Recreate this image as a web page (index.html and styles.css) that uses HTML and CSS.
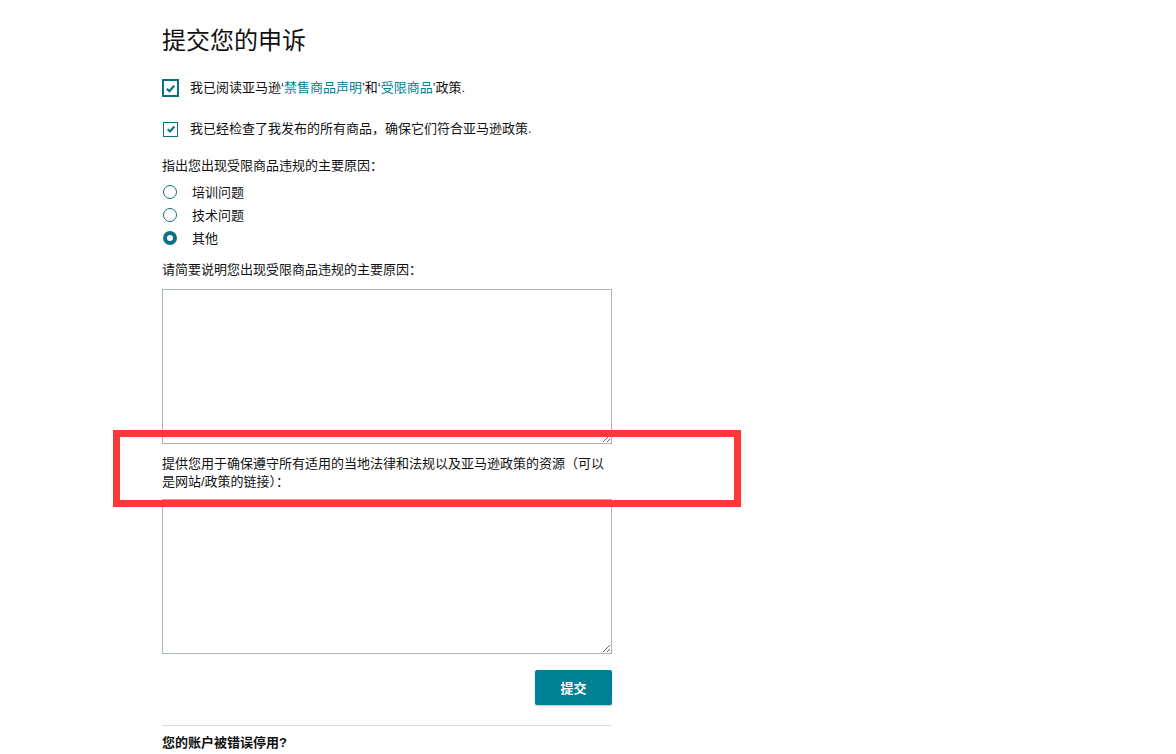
FILE: index.html
```html
<!DOCTYPE html>
<html lang="zh">
<head>
<meta charset="utf-8">
<title>提交您的申诉</title>
<link rel="stylesheet" href="styles.css">
</head>
<body>
<div class="page">
  <h1 class="title">提交您的申诉</h1>

  <div class="check-row first">
    <span class="box box-focus"><svg viewBox="0 0 12 12" width="11" height="11"><path d="M2 6.2 L4.8 9 L10 3" fill="none" stroke="#0b7285" stroke-width="2.4"/></svg></span>
    <span class="check-label">我已阅读亚马逊‘<span class="link">禁售商品声明</span>’和‘<span class="link">受限商品</span>’政策.</span>
  </div>

  <div class="check-row second">
    <span class="box"><svg viewBox="0 0 12 12" width="10" height="10"><path d="M2 6.2 L4.8 9 L10 3" fill="none" stroke="#0b7285" stroke-width="2.4"/></svg></span>
    <span class="check-label">我已经检查了我发布的所有商品，确保它们符合亚马逊政策.</span>
  </div>

  <div class="q-label">指出您出现受限商品违规的主要原因：</div>

  <div class="radios">
    <div class="radio-row"><span class="radio"></span><span class="radio-label">培训问题</span></div>
    <div class="radio-row"><span class="radio"></span><span class="radio-label">技术问题</span></div>
    <div class="radio-row"><span class="radio radio-on"></span><span class="radio-label">其他</span></div>
  </div>

  <div class="q-label q2">请简要说明您出现受限商品违规的主要原因：</div>
  <textarea class="area area1"></textarea>

  <div class="q-label q3">提供您用于确保遵守所有适用的当地法律和法规以及亚马逊政策的资源（可以是网站/政策的链接）：</div>
  <textarea class="area area2"></textarea>

  <div class="actions"><button class="submit">提交</button></div>

  <hr class="divider">
  <div class="sub-head">您的账户被错误停用?</div>
</div>
<div class="highlight"></div>
</body>
</html>
```

FILE: styles.css
```css
html, body {
  margin: 0;
  padding: 0;
  background: #fff;
}
body {
  font-family: "Liberation Sans", "Noto Sans CJK SC", sans-serif;
  font-size: 13px;
  color: #111;
  height: 754px;
  overflow: hidden;
  position: relative;
}
.page {
  margin-left: 162px;
  width: 450px;
}
.title {
  margin: 25px 0 0;
  font-size: 24px;
  line-height: 32px;
  font-weight: normal;
  color: #111;
}
.check-row {
  display: flex;
  align-items: center;
  height: 20px;
  line-height: 20px;
}
.check-row.first { margin-top: 21px; }
.check-row.second { margin-top: 21px; }
.box {
  box-sizing: border-box;
  width: 15px;
  height: 15px;
  border: 1px solid #0b7285;
  display: flex;
  align-items: center;
  justify-content: center;
  margin-left: 1px;
  margin-right: 12px;
}
.box-focus {
  width: 17px;
  height: 18px;
  border: 2px solid #0b7285;
  margin-left: 0;
  margin-right: 11px;
}
.link { color: #008296; }
.q-label {
  margin-top: 17px;
  line-height: 20px;
}
.radios { margin-top: 4px; }
.radio-row {
  display: flex;
  align-items: center;
  height: 23px;
}
.radio {
  box-sizing: border-box;
  width: 14px;
  height: 14px;
  border-radius: 50%;
  border: 1px solid #0b7285;
  margin-left: 1px;
  margin-right: 15px;
}
.radio-on {
  border: 4px solid #0b7285;
}
.q2 { margin-top: 11px; }
.area {
  display: block;
  box-sizing: border-box;
  width: 450px;
  height: 155px;
  border: 1px solid #a9b6b8;
  border-radius: 0;
  margin: 0;
  padding: 4px;
  font-family: inherit;
  background: #fff;
}
.area1 { margin-top: 9px; }
.q3 {
  margin-top: 11px;
  line-height: 18px;
}
.area2 { margin-top: 8px; }
.actions {
  display: flex;
  justify-content: flex-end;
  margin-top: 16px;
}
.submit {
  width: 77px;
  height: 35px;
  background: #008296;
  color: #fff;
  border: none;
  border-radius: 2px;
  box-shadow: 0 1px 2px rgba(0,0,0,0.25);
  font-family: inherit;
  font-size: 13px;
  font-weight: bold;
}
.divider {
  margin: 20px 0 0;
  border: none;
  border-top: 1px solid #ddd;
  height: 0;
}
.sub-head {
  margin-top: 7px;
  line-height: 20px;
  font-size: 13px;
  font-weight: bold;
}
.highlight {
  position: absolute;
  left: 113px;
  top: 430px;
  width: 628px;
  height: 77px;
  box-sizing: border-box;
  border: 7px solid #f83a3a;
  pointer-events: none;
}
```
